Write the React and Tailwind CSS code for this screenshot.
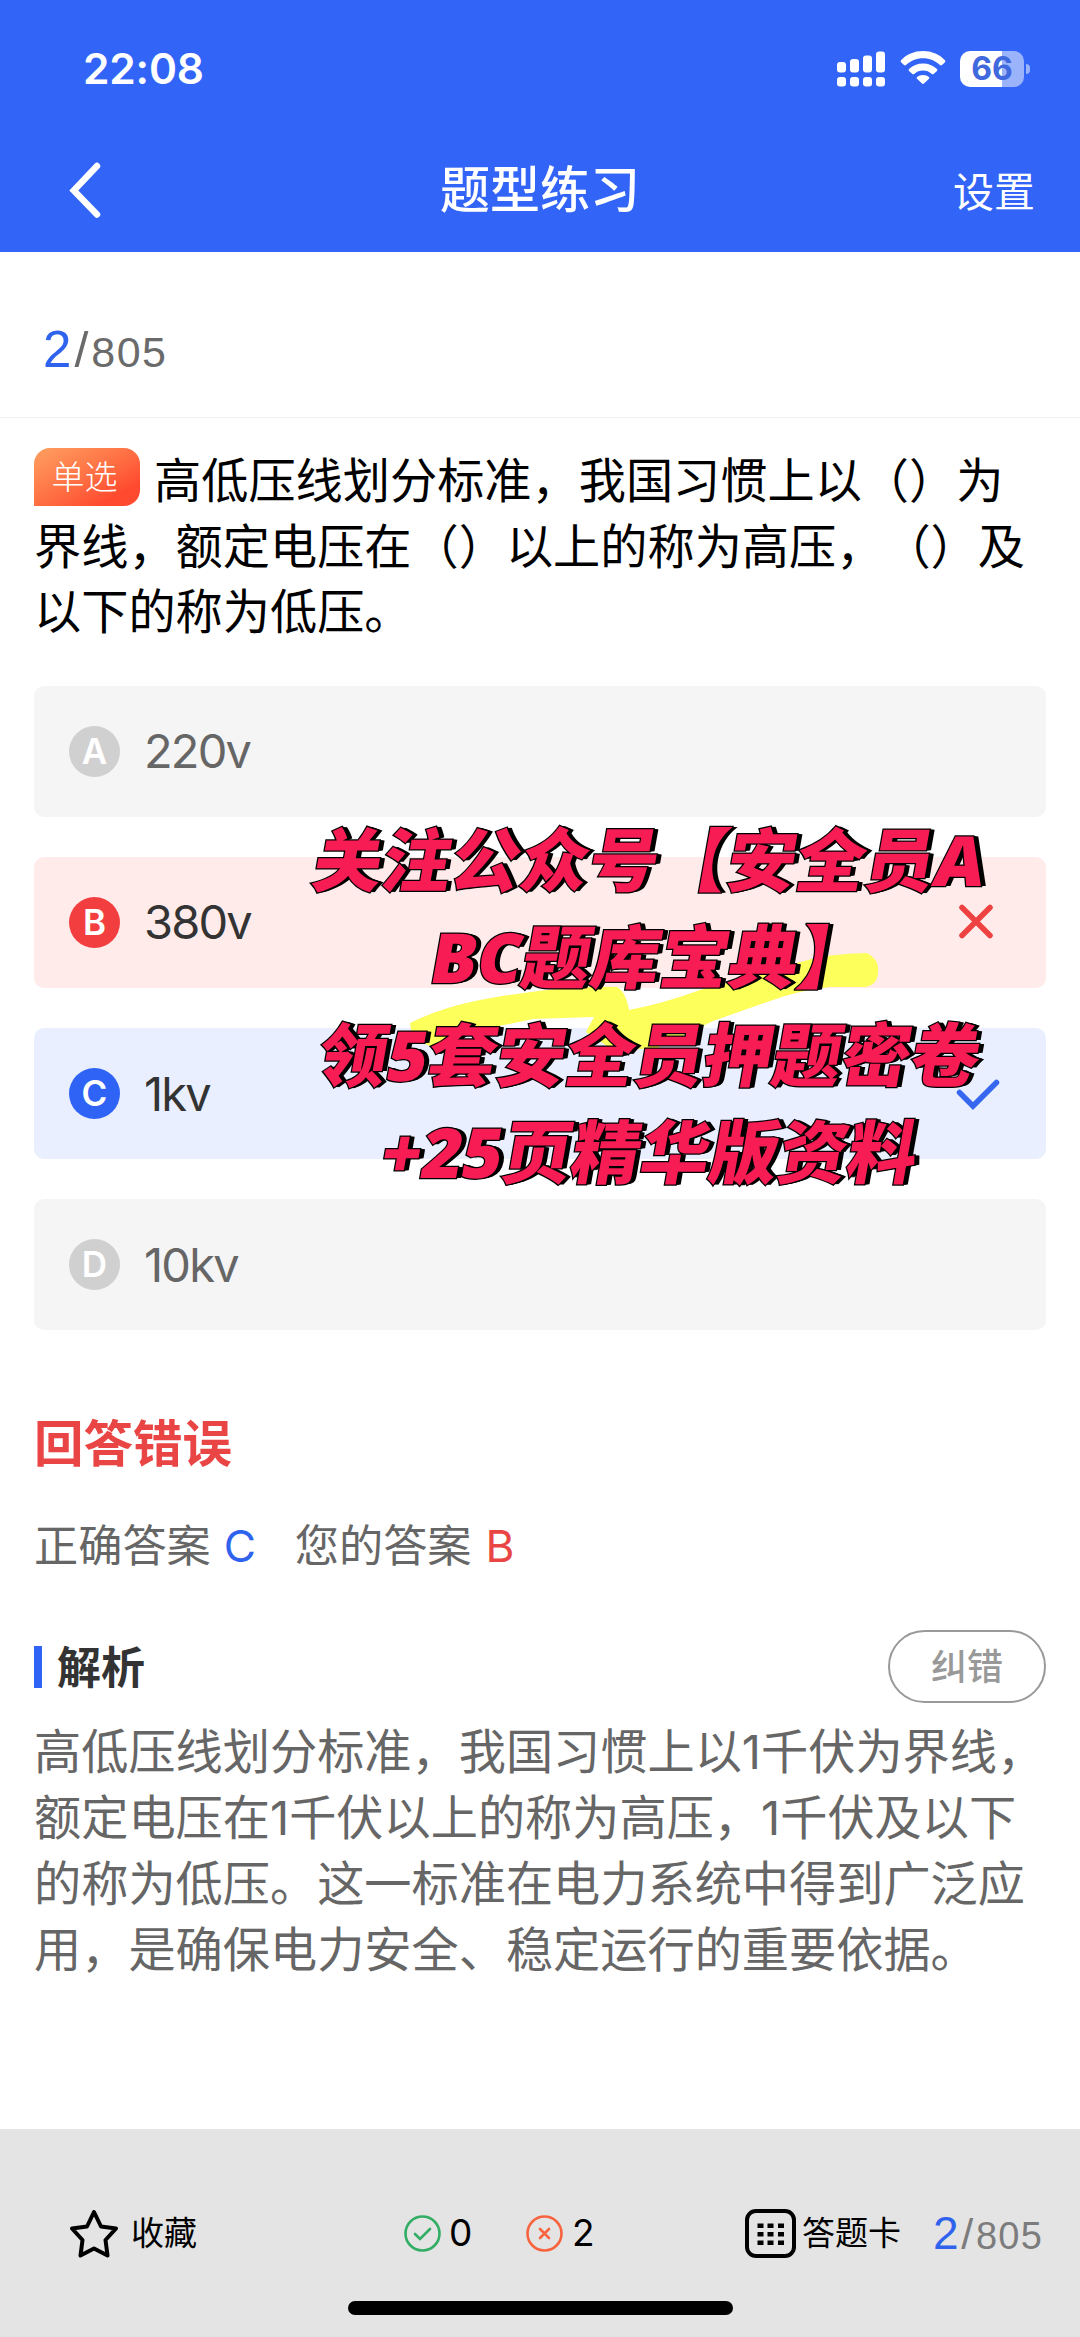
import React, { useState } from "react";

const options = [
  { key: "A", text: "220v" },
  { key: "B", text: "380v" },
  { key: "C", text: "1kv" },
  { key: "D", text: "10kv" },
];

const rowStyles = {
  normal: "bg-[#f5f5f5] text-[#666]",
  wrong: "bg-[#feebea] text-[#333]",
  right: "bg-[#e9effe] text-[#333]",
};

const badgeStyles = {
  normal: "bg-[#d1d0d1]",
  wrong: "bg-[#f33e40]",
  right: "bg-[#2f63f6]",
};

function StatusBar() {
  return (
    <div className="flex items-start justify-between pl-[83px] pr-[50px] pt-[42px] h-[138px]">
      <span className="text-[42.500px] leading-[54px] font-semibold tracking-[-0.2px]">22:08</span>
      <div className="flex pt-[8px]">
        <svg width="49" height="36" viewBox="0 0 49 36" fill="#fff" className="mt-[1px]">
          <rect x="0" y="11" width="9" height="10.5" rx="3" />
          <rect x="13" y="8" width="9" height="13.5" rx="3" />
          <rect x="26" y="4.5" width="9" height="17" rx="3" />
          <rect x="39" y="0.5" width="9" height="21" rx="3" />
          <rect x="0" y="26" width="9" height="9.5" rx="3" />
          <rect x="13" y="26" width="9" height="9.5" rx="3" />
          <rect x="26" y="26" width="9" height="9.5" rx="3" />
          <rect x="39" y="26" width="9" height="9.5" rx="3" />
        </svg>
        <svg width="46" height="34" viewBox="0 0 46 34" fill="#fff" className="ml-[14px] mt-px">
          <path d="M23 0C32 0 39.500 3.400 45 9.200Q45.800 10.200 45 11.200L42 14Q41 14.800 40 14C35.300 9.600 29.500 7.200 23 7.200S10.700 9.600 6 14Q5 14.800 4 14L1 11.200Q.2 10.200 1 9.200C6.500 3.400 14 0 23 0Z" />
          <path d="M23 12.500C28.500 12.500 33.300 14.500 37 18Q37.800 19 37 19.900L33.600 22.900Q32.700 23.600 31.800 22.900C29.300 20.700 26.300 19.500 23 19.500S16.700 20.700 14.200 22.900Q13.300 23.600 12.400 22.900L9 19.900Q8.200 19 9 18C12.700 14.500 17.500 12.500 23 12.500Z" />
          <path d="M23 24C25.500 24 27.500 24.800 29 26Q29.800 26.900 29 27.800L24 32.600Q23 33.500 22 32.600L17 27.800Q16.200 26.900 17 26C18.500 24.800 20.500 24 23 24Z" />
        </svg>
        <div className="ml-[14px] flex items-center">
          <div className="w-[64px] h-[36px] rounded-[10px] flex items-center justify-center bg-linear-to-r from-white from-66% to-[#9bb3fb] to-66% text-[#3f69dd] text-[32px] leading-[36px] font-bold">
            66
          </div>
          <div className="ml-[2px] w-[4px] h-[10px] rounded-r-full bg-[#9bb3fb]" />
        </div>
      </div>
    </div>
  );
}

function NavBar() {
  return (
    <div className="grid grid-cols-[1fr_auto_1fr] items-center h-[104px] px-[45px]">
      <svg className="ml-[24px]" width="34" height="56" viewBox="0 0 34 56" fill="none" stroke="#fff" strokeWidth="6.500">
        <path d="M28 4L4.800 28.500L28 52.500" strokeLinecap="round" strokeLinejoin="miter" />
      </svg>
      <h1 className="text-[50px] leading-[60px] font-medium">题型练习</h1>
      <span className="justify-self-end text-[41px] leading-[50px] pt-[3px]">设置</span>
    </div>
  );
}

function Option({ item, status }) {
  return (
    <div className={`flex items-center h-[131px] rounded-[10px] pl-[35px] pr-[45px] ${rowStyles[status]}`}>
      <span className={`flex items-center justify-center w-[51px] h-[51px] rounded-full text-white text-[35px] leading-none font-semibold ${badgeStyles[status]}`}>
        {item.key}
      </span>
      <span className="ml-[24px] text-[47px] leading-[60px] tracking-[-1.800px] grow">{item.text}</span>
      {status === "wrong" && (
        <svg width="50" height="50" viewBox="0 0 50 50" stroke="#ee4141" strokeWidth="5.500" strokeLinecap="round">
          <path d="M11 10.500L39 38.500M39 10.500L11 38.500" />
        </svg>
      )}
      {status === "right" && (
        <svg width="50" height="50" viewBox="0 0 50 50" fill="none" stroke="#3668ef" strokeWidth="5.500" strokeLinecap="round">
          <path d="M8.500 23.500L22 37L45.500 13.500" />
        </svg>
      )}
    </div>
  );
}

// Promo sticker lying over the options
function Promo() {
  const lines = ["关注公众号【安全员A", "BC题库宝典】", "领5套安全员押题密卷", "+25页精华版资料"];
  return (
    <div className="absolute left-[246px] top-[125px] w-[740px]">
      <svg className="absolute left-[120px] top-[121px]" width="490" height="130" viewBox="400 932 490 130" fill="#fdff5a">
        <path d="M410 1023Q440 1008 480 1000Q560 985 617 987Q626 992 629 1010Q665 1003 700 990L797 963Q830 953 867 953Q880 960 878 972Q878 984 866 987L830 987Q800 990 770 1001L713 1021L653 1050L607 1046L586 1032L594 1017L533 1019L480 1030L433 1048L412 1036Z" />
      </svg>
      <div className="relative text-center font-black text-[69px] leading-[97.600px] text-[#f81c55] whitespace-nowrap font-['Noto_Sans','Noto_Sans_CJK_SC',sans-serif] [text-spacing-trim:space-all] [paint-order:stroke_fill] [-webkit-text-stroke:2.500px_#000] [text-shadow:1px_0_#000,2px_0_#000,3px_0_#000,4px_0_#000,5px_0_#000]">
        {lines.map((line) => (
          <div key={line} className="-skew-x-[10deg]">{line}</div>
        ))}
      </div>
    </div>
  );
}

function Footer({ current, total, rightCount, wrongCount }) {
  return (
    <footer className="bg-[#e4e4e4] h-[208px] flex flex-col items-center">
      <div className="flex items-center w-full h-[48px] mt-[80px] pl-[70px] pr-[37px] text-black text-[33px]">
        <svg width="48" height="49" viewBox="0 0 48 49" fill="none" stroke="#000" strokeWidth="4" strokeLinejoin="round">
          <path d="M24 3L31 17.500L46 19.500L35.500 31L37.500 46.500L24 39.500L10.500 46.500L12.500 31L2 19.500L17 17.500Z" />
        </svg>
        <span className="ml-[13px] pt-[2px]">收藏</span>
        <svg className="ml-[207px]" width="37" height="37" viewBox="0 0 37 37" fill="none" stroke="#31ad64" strokeWidth="2.600">
          <circle cx="18.500" cy="18.500" r="17" />
          <path d="M11 19L16 24L26 14" strokeLinecap="round" />
        </svg>
        <span className="ml-[8px] w-[76px] text-[37px]">{rightCount}</span>
        <svg className="ml-px" width="37" height="37" viewBox="0 0 37 37" fill="none" stroke="#f8643f" strokeWidth="2.600">
          <circle cx="18.500" cy="18.500" r="17" />
          <path d="M14 14L23 23M23 14L14 23" strokeLinecap="round" />
        </svg>
        <span className="ml-[9px] text-[37px]">{wrongCount}</span>
        <svg className="ml-auto" width="51" height="49" viewBox="0 0 51 49">
          <rect x="2" y="2" width="47" height="45" rx="9" fill="none" stroke="#000" strokeWidth="4" />
          {[14.5, 23, 31.5].map((y) =>
            [12.5, 22.5, 33].map((x) => <rect key={x + "-" + y} x={x} y={y} width="6" height="4.500" />)
          )}
        </svg>
        <span className="ml-[6px] pt-[2px] text-[33px]">答题卡</span>
        <div className="ml-[32px] font-['Liberation_Sans',sans-serif] text-[38px] text-[#7c7c7c] leading-[48px] pt-[2px] tracking-[1.200px]">
          <span className="text-[46px] text-[#2f63ee]">{current}</span>
          <span className="mx-[1.500px] text-[43px]">/</span>
          {total}
        </div>
      </div>
      <div className="mt-[44px] w-[385px] h-[14px] rounded-full bg-black" />
    </footer>
  );
}

export default function App() {
  const [current] = useState(2);
  const total = 805;
  const answer = "C";
  const picked = "B";

  const getStatus = (key) => {
    if (key === answer) return "right";
    if (key === picked) return "wrong";
    return "normal";
  };

  return (
    <div className="w-[1080px] h-[2337px] flex flex-col bg-white overflow-hidden font-['Inter','Noto_Sans_CJK_SC',sans-serif]" lang="zh-CN">
      <header className="h-[252px] bg-[#3164f7] text-white">
        <StatusBar />
        <NavBar />
      </header>

      <div className="h-[166px] border-b border-[#f3f3f3] pl-[43px] pt-[66px] font-['Liberation_Sans',sans-serif] text-[43px] leading-[64px] text-[#6a6a6a] tracking-[1.500px]">
        <span className="text-[51px] text-[#2f63ee]">{current}</span>
        <span className="mx-[1.500px] text-[50px]">/</span>
        {total}
      </div>

      <main className="grow px-[34px] pt-[30px]">
        <div className="text-[47.2px] leading-[65.500px] text-black [text-spacing-trim:space-all]">
          <span className="inline-flex align-top items-center justify-center w-[106px] h-[58px] mr-[14px] pr-[5px] rounded-[16px] rounded-bl-none bg-linear-to-br from-[#ff9f60] to-[#ff4a30] to-80% text-white text-[33px] leading-none font-light">
            单选
          </span>
          高低压线划分标准，我国习惯上以（）为
          <br />
          界线，额定电压在（）以上的称为高压，（）及
          <br />
          以下的称为低压。
        </div>

        <div className="relative flex flex-col gap-[40.300px] mt-[41px]">
          {options.map((item) => (
            <Option key={item.key} item={item} status={getStatus(item.key)} />
          ))}
          <Promo />
        </div>

        <h2 className="mt-[89px] text-[49.500px] leading-[50px] font-bold text-[#ea4545]">回答错误</h2>

        <div className="flex mt-[52px] text-[44.200px] leading-[50px] text-[#666]">
          <span>正确答案</span>
          <span className="ml-[13px] w-[71px] text-[#2f63ee]">{answer}</span>
          <span>您的答案</span>
          <span className="ml-[14px] text-[#ea4545]">{picked}</span>
        </div>

        <div className="flex items-center mt-[59px]">
          <div className="w-[8px] h-[42px] bg-[#2f63f6]" />
          <h3 className="ml-[15px] text-[44px] leading-[50px] pt-[2px] font-bold text-[#333]">解析</h3>
          <button className="ml-auto w-[158px] h-[73px] rounded-full border-[2.500px] border-[#999] text-[36px] leading-none font-medium text-[#999]">
            纠错
          </button>
        </div>

        <p className="mt-[16px] text-[47.2px] leading-[66px] text-[#666] whitespace-nowrap [text-spacing-trim:space-all]">
          高低压线划分标准，我国习惯上以1千伏为界线，
          <br />
          额定电压在1千伏以上的称为高压，1千伏及以下
          <br />
          的称为低压。这一标准在电力系统中得到广泛应
          <br />
          用，是确保电力安全、稳定运行的重要依据。
        </p>
      </main>

      <Footer current={current} total={total} rightCount={0} wrongCount={2} />
    </div>
  );
}
